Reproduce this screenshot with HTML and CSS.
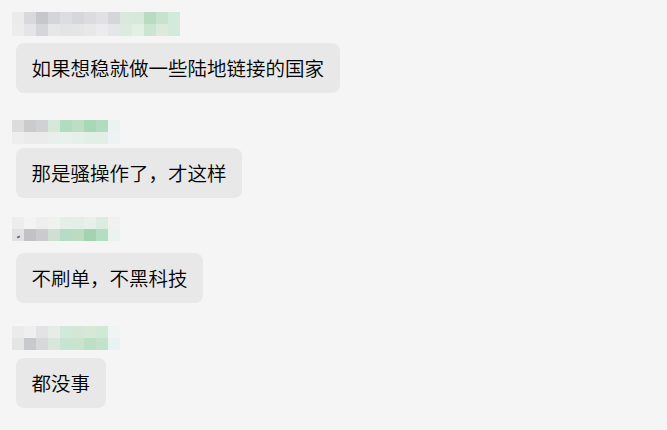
FILE: index.html
```html
<!DOCTYPE html>
<html lang="zh-CN">

<head>
    <meta charset="UTF-8">
    <meta name="viewport" content="width=device-width, initial-scale=1.0">
    <title>聊天记录</title>
    <link rel="stylesheet" href="styles.css">
</head>

<body>
    <div class="chat">
        <div class="msg">
            <div class="name name-1">
                <div class="row r1"></div>
                <div class="row r2"></div>
            </div>
            <div class="bubble">如果想稳就做一些陆地链接的国家</div>
        </div>

        <div class="msg">
            <div class="name name-2">
                <div class="row r1"></div>
                <div class="row r2"></div>
            </div>
            <div class="bubble">那是骚操作了，才这样</div>
        </div>

        <div class="msg">
            <div class="name name-3">
                <div class="row r1"></div>
                <div class="row r2"></div>
            </div>
            <div class="bubble">不刷单，不黑科技</div>
        </div>

        <div class="msg">
            <div class="name name-4">
                <div class="row r1"></div>
                <div class="row r2"></div>
            </div>
            <div class="bubble">都没事</div>
        </div>
    </div>
</body>

</html>
```

FILE: styles.css
```css
body {
    margin: 0;
    padding: 0;
    background-color: #f5f5f5;
    font-family: "Noto Sans CJK SC", "Microsoft YaHei", sans-serif;
    color: #000;
}

.chat {
    display: flex;
    flex-direction: column;
    padding: 12px 0 0 16px;
}

.msg {
    display: flex;
    flex-direction: column;
    align-items: flex-start;
    margin-bottom: 24px;
}

/* pixelated nickname (mosaic) */
.name {
    margin-left: -4px;
    display: flex;
    flex-direction: column;
}

.name .row {
    height: 12px;
    width: 108px;
}

.name-1 {
    margin-bottom: 7px;
}

.name-1 .row {
    width: 168px;
}

.name-1 .r1 {
    background: linear-gradient(to right,
            #ebebeb 0 12px, #d9d9dc 12px 24px, #c6c7ca 24px 36px, #d3d5d8 36px 48px,
            #dcdde0 48px 60px, #d6d7da 60px 72px, #dcdcdf 72px 84px, #e1e1e4 84px 96px,
            #d5d6d9 96px 108px, #dbe8dd 108px 120px, #d7e9da 120px 132px, #b9dbbf 132px 144px,
            #c7e3cf 144px 156px, #d3eadb 156px 168px);
}

.name-1 .r2 {
    background: linear-gradient(to right,
            #ececec 0 12px, #e5e5e7 12px 24px, #d5d6d9 24px 36px, #e7e7e8 36px 48px,
            #e3e4e6 48px 60px, #e3e5e7 60px 72px, #e8e8e8 72px 84px, #ececee 84px 96px,
            #e5e6e8 96px 108px, #dceadf 108px 120px, #e2efe4 120px 132px, #cce5d2 132px 144px,
            #dbeadb 144px 156px, #d3eadb 156px 168px);
}

.name-2 {
    margin-top: 3px;
    margin-bottom: 4px;
}

.name-2 .r1 {
    background: linear-gradient(to right,
            #dcdcdc 0 12px, #cbcbcd 12px 24px, #d0d1d3 24px 36px, #d5e8da 36px 48px,
            #b2dcc0 48px 60px, #bcdec4 60px 72px, #a8d8b5 72px 84px, #b1dcc0 84px 96px,
            #ebf3f0 96px 108px);
}

.name-2 .r2 {
    background: linear-gradient(to right,
            #eeeeee 0 12px, #ebebeb 12px 24px, #ebebec 24px 36px, #e9efeb 36px 48px,
            #e8f1ec 48px 60px, #e5f0e8 60px 72px, #e2efe6 72px 84px, #e3efe6 84px 96px,
            #ecf4f3 96px 108px);
}

.name-3 {
    position: relative;
    margin-top: -5px;
    margin-bottom: 12px;
}

.name-3 .r1 {
    background: linear-gradient(to right,
            #ededed 0 12px, #f3f3f3 12px 24px, #eeeeee 24px 36px, #eff2ef 36px 48px,
            #e3efe7 48px 60px, #e2eee6 60px 72px, #e8f0ea 72px 84px, #dbece1 84px 96px,
            #f0f2f1 96px 108px);
}

.name-3 .r2 {
    background: linear-gradient(to right,
            #e2e2e2 0 12px, #c2c2c4 12px 24px, #cbcbcd 24px 36px, #cfe0d3 36px 48px,
            #b6dcc6 48px 60px, #bcdcc1 60px 72px, #a3d3b0 72px 84px, #b4dec2 84px 96px,
            #e9f4f1 96px 108px);
}

/* small leftover mark under the mosaic */
.name-3::after {
    content: "";
    position: absolute;
    left: 5px;
    top: 19px;
    width: 3px;
    height: 2px;
    background-color: #5a6a8a;
    transform: rotate(-30deg);
}

.name-4 {
    margin-top: -1px;
    margin-bottom: 8px;
}

.name-4 .r1 {
    background: linear-gradient(to right,
            #ebebeb 0 12px, #efefef 12px 24px, #e3e3e5 24px 36px, #e6ece8 36px 48px,
            #d1e8dc 48px 60px, #d5e6d9 60px 72px, #d6e8d6 72px 84px, #d0e8d6 84px 96px,
            #f0f4f4 96px 108px);
}

.name-4 .r2 {
    background: linear-gradient(to right,
            #e5e5e5 0 12px, #c8c9cd 12px 24px, #d7d8da 24px 36px, #d9e6db 36px 48px,
            #c5e4d2 48px 60px, #c9e3cc 60px 72px, #bde0c5 72px 84px, #c1e2cb 84px 96px,
            #e7f3f0 96px 108px);
}

.bubble {
    background-color: #e8e8e8;
    border-radius: 8px;
    padding: 0 15.5px;
    height: 50px;
    line-height: 50px;
    font-size: 19.5px;
    font-weight: 350;
    white-space: nowrap;
}
```
